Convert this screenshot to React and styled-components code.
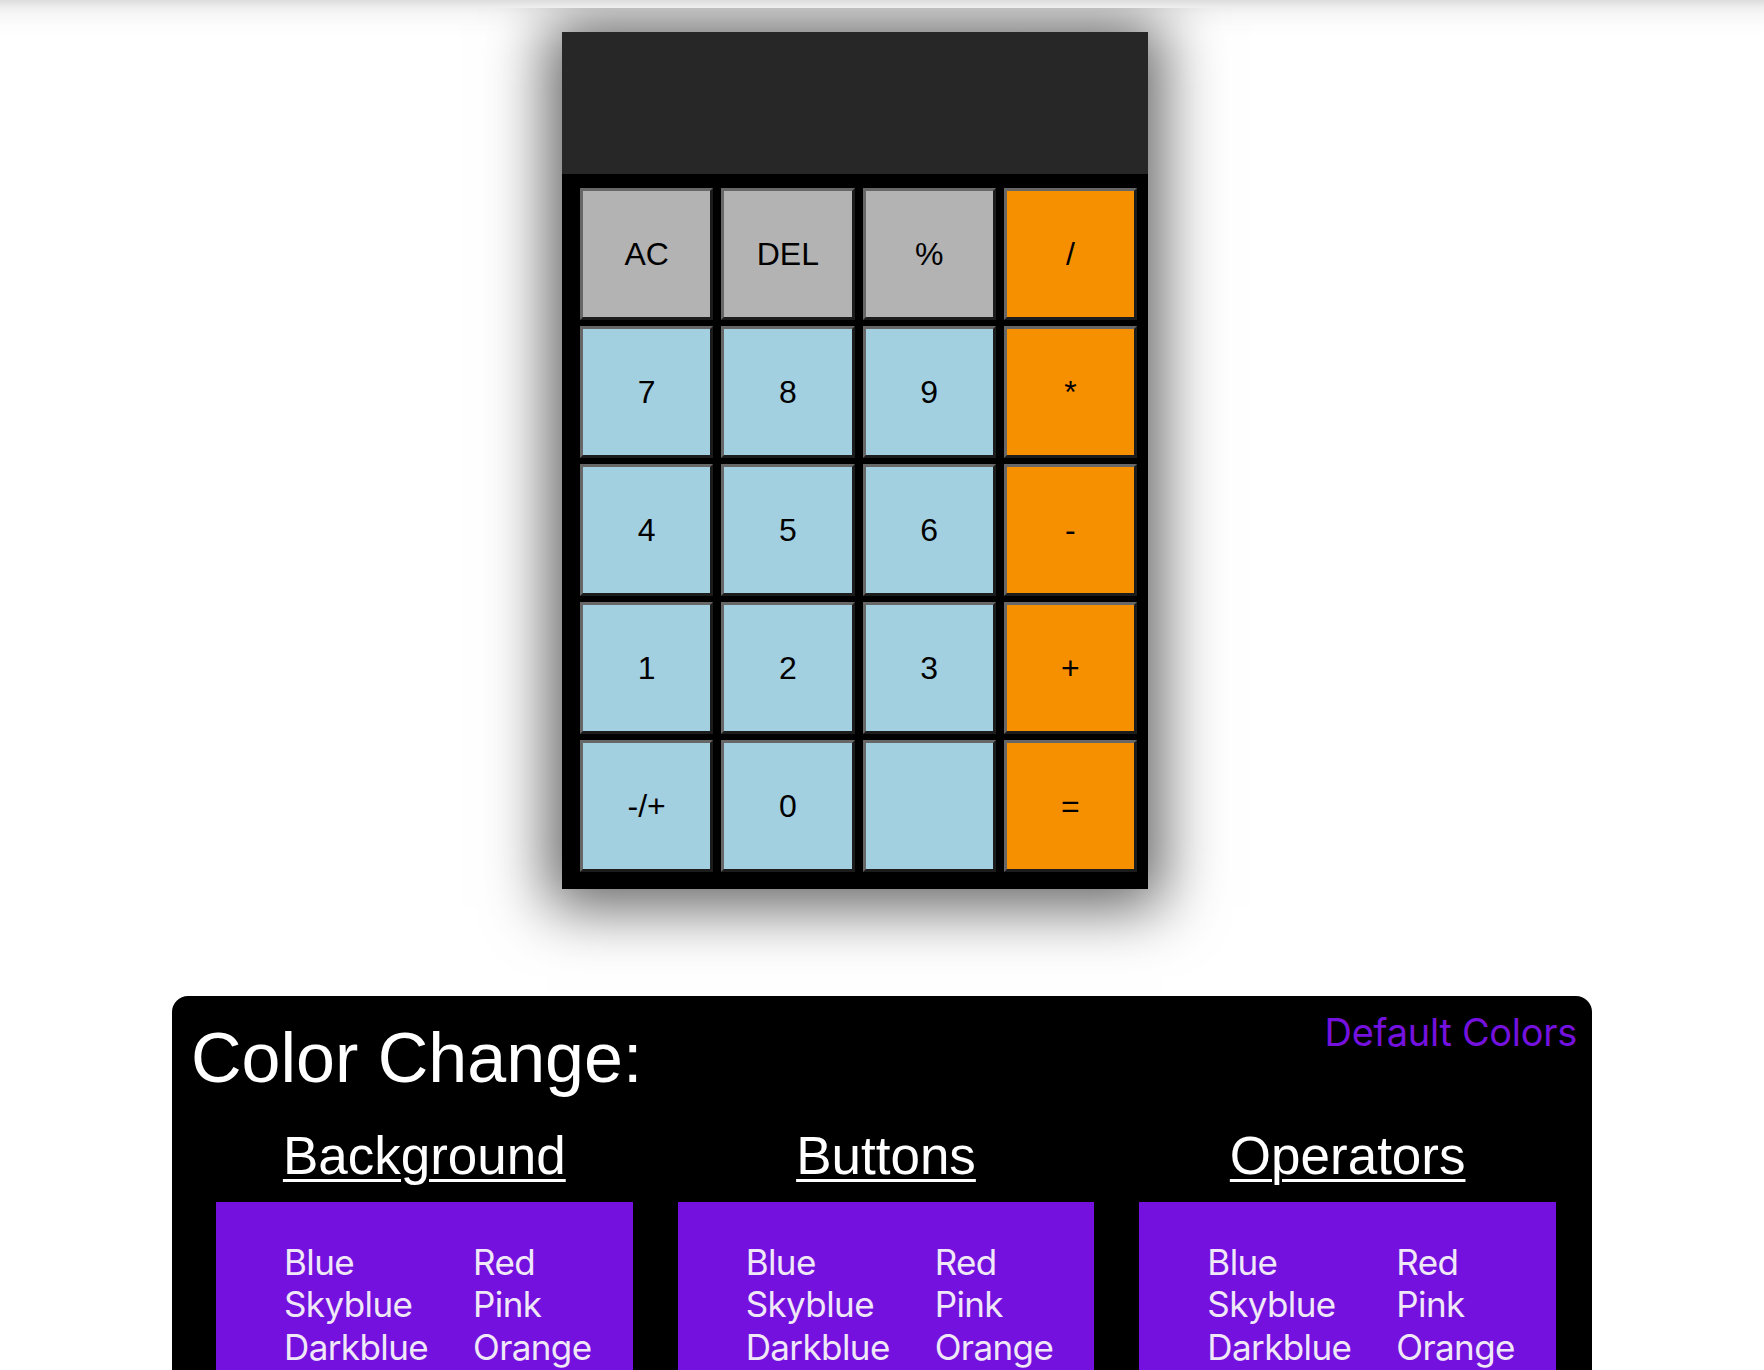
import React from "react";
import styled, { createGlobalStyle } from "styled-components";

const GlobalStyle = createGlobalStyle`
    html {
        background: linear-gradient(#dcdcdc 0, #eeeeee 7px, #f7f7f7 15px, #fcfcfc 25px, #fff 36px) no-repeat, #fff;
    }
    body {
        margin: 8px;
        font-family: "Liberation Sans", Arial, sans-serif;
    }
`;

const colors = {
    fn: "#b3b3b3",
    num: "#a2d0e0",
    op: "#f79000",
    purple: "#7411df",
};

const CalcWrap = styled.div`
    display: flex;
    justify-content: center;
    padding-right: 54px;
    margin-top: 24px;
`;

const Calculator = styled.div`
    width: 586px;
    background: #000;
    box-shadow: 0 4px 58px 14px rgba(0, 0, 0, 0.62);
`;

const Display = styled.div`
    height: 142px;
    background: #272727;
`;

const Keypad = styled.div`
    display: grid;
    grid-template-columns: repeat(4, 1fr);
    grid-auto-rows: 132px;
    gap: 6px 8px;
    padding: 14px 11px 17px 18px;
`;

const Key = styled.button`
    margin: 0;
    padding: 0;
    border-width: 3px;
    border-style: solid;
    border-color: #676767 #1c1c1c #1c1c1c #676767;
    background: ${(p) => colors[p.$kind]};
    color: #000;
    font-family: "Liberation Sans", Arial, sans-serif;
    font-size: 32px;
    cursor: pointer;
`;

const Panel = styled.div`
    margin: 107px 164px 0;
    background: #000;
    border-radius: 16px;
    padding: 13px 15px 40px 19px;
`;

const TopRow = styled.div`
    display: flex;
    justify-content: space-between;
    align-items: flex-start;
`;

const Title = styled.h1`
    margin: 8.5px 0 0;
    color: #fff;
    font-size: 70px;
    font-weight: 400;
    line-height: normal;
`;

const DefaultButton = styled.button`
    background: none;
    border: none;
    padding: 0;
    color: ${colors.purple};
    font-family: Inter, "Noto Sans", sans-serif;
    font-size: 38px;
    letter-spacing: -0.3px;
    line-height: normal;
    cursor: pointer;
`;

const Columns = styled.div`
    display: grid;
    grid-template-columns: repeat(3, 1fr);
    column-gap: 45px;
    margin-top: 27px;
    padding: 0 21px 0 25px;
`;

const ColumnHeader = styled.h2`
    margin: 0 0 16px;
    color: #fff;
    font-size: 53px;
    font-weight: 400;
    line-height: normal;
    text-align: center;
    text-decoration: underline;
    text-decoration-thickness: 3px;
    text-underline-offset: 5px;
`;

const ColorBox = styled.div`
    display: grid;
    grid-template-columns: 189px auto;
    background: ${colors.purple};
    padding: 39px 0 39px 68px;
`;

const ColorOption = styled.div`
    color: #f0e8f7;
    font-family: Inter, "Noto Sans", sans-serif;
    font-size: 35px;
    letter-spacing: -0.6px;
    line-height: 42.5px;
    cursor: pointer;
`;

const keys = [
    ["AC", "fn"], ["DEL", "fn"], ["%", "fn"], ["/", "op"],
    ["7", "num"], ["8", "num"], ["9", "num"], ["*", "op"],
    ["4", "num"], ["5", "num"], ["6", "num"], ["-", "op"],
    ["1", "num"], ["2", "num"], ["3", "num"], ["+", "op"],
    ["-/+", "num"], ["0", "num"], ["", "num"], ["=", "op"],
];

const options = ["Blue", "Red", "Skyblue", "Pink", "Darkblue", "Orange"];

const sections = ["Background", "Buttons", "Operators"];

const App = () => {
    return (
        <>
            <GlobalStyle />
            <CalcWrap>
                <Calculator>
                    <Display />
                    <Keypad>
                        {keys.map(([label, kind], i) => (
                            <Key key={i} $kind={kind}>{label}</Key>
                        ))}
                    </Keypad>
                </Calculator>
            </CalcWrap>

            <Panel>
                <TopRow>
                    <Title>Color Change:</Title>
                    <DefaultButton>Default Colors</DefaultButton>
                </TopRow>
                <Columns>
                    {sections.map((name) => (
                        <div key={name}>
                            <ColumnHeader>{name}</ColumnHeader>
                            <ColorBox>
                                {options.map((o) => (
                                    <ColorOption key={o}>{o}</ColorOption>
                                ))}
                            </ColorBox>
                        </div>
                    ))}
                </Columns>
            </Panel>
        </>
    );
};

export default App;
